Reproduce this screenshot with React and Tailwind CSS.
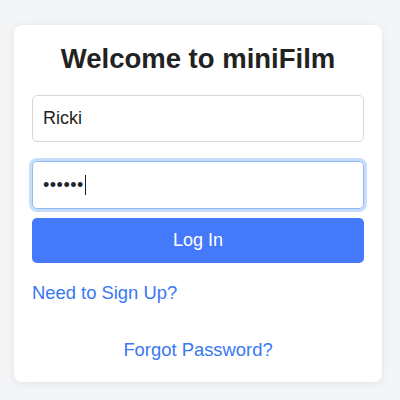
import { useState } from 'react';

export default function App() {
    const [username, setUsername] = useState('Ricki');

    return (
        <div className="w-[400px] h-[400px] bg-[#f4f5f7] pt-[25px] pl-[14px] font-['Liberation_Sans',Arial,sans-serif]">
            <div className="w-[368px] h-[357px] bg-white rounded-[8px] shadow-[0_1px_8px_rgba(0,0,0,0.08)] px-[18px] pt-[18px]">
                <h1 className="text-[27.5px] leading-[32px] font-bold text-[#222] text-center">Welcome to miniFilm</h1>

                <input
                    value={username}
                    onChange={e => setUsername(e.target.value)}
                    className="mt-[20px] block w-full h-[47px] border border-[#d6d6d6] rounded-[5px] px-[10px] text-[18px] text-[#222] outline-none"
                />

                {/* campo de contraseña con foco */}
                <div className="mt-[19px] w-full h-[48px] border border-[#8fbaf5] rounded-[5px] ring-[3px] ring-[#c6ddfb] px-[10px] flex items-center">
                    <span className="text-[18px] text-[#1f2430] tracking-[0.5px] leading-none">••••••</span>
                    <span className="w-px h-[20px] bg-[#222] ml-px"></span>
                </div>

                <button className="mt-[9px] w-full h-[45px] bg-[#4479fb] rounded-[5px] text-white text-[18px]">
                    Log In
                </button>

                <a href="#" className="block mt-[19px] text-[18.4px] leading-[21px] text-[#3a78f2]">Need to Sign Up?</a>

                <a href="#" className="block mt-[36px] text-center text-[18.4px] leading-[21px] text-[#3a78f2]">Forgot Password?</a>
            </div>
        </div>
    );
}
